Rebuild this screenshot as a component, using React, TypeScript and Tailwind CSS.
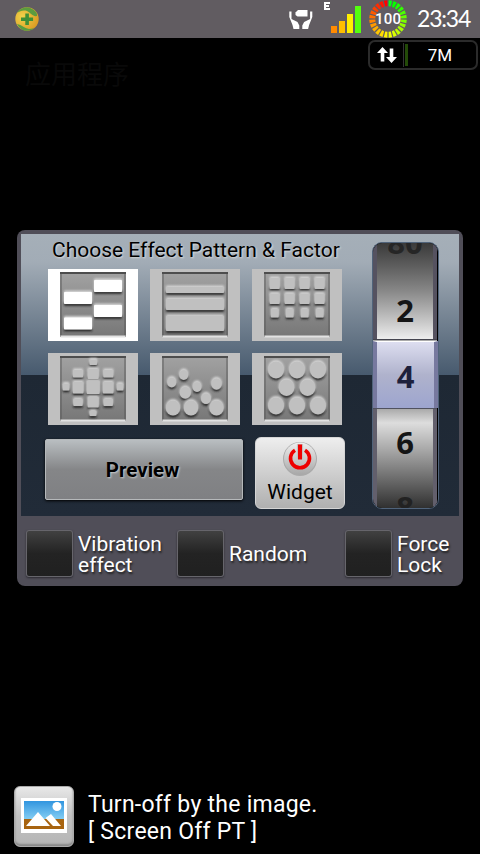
import type { ReactNode } from 'react';

type Rect = [number, number, number, number];
type Dot = [number, number, number];

interface Pattern {
  name: string;
  rects?: Rect[];
  dots?: Dot[];
}

const columns = [17.7, 32.6, 47.6, 62.6];

const patterns: Pattern[] = [
  {
    name: 'bricks',
    rects: [[46, 11, 28, 12], [16, 23, 28, 12], [46, 36, 28, 12], [16, 48.5, 28, 12]],
  },
  {
    name: 'bars',
    rects: [[16, 18, 58, 6], [16, 30, 58, 11], [16, 47, 58, 15]],
  },
  {
    name: 'grid',
    rects: columns.flatMap((x): Rect[] => [
      [x, 9, 10, 11],
      [x, 24.5, 10, 10.5],
      [x + 1.2, 40, 7.8, 8.5],
    ]),
  },
  {
    name: 'star',
    rects: [
      [41.5, 6.5, 7.5, 5.5],
      [25, 17, 10, 7.5], [39.7, 16, 11, 10], [55.3, 17, 10, 7.5],
      [14.8, 30.5, 6.5, 7], [24.9, 29, 10.6, 11.5], [38.7, 28, 13, 13], [54.9, 29, 10.6, 11.5], [68.8, 30.5, 6.5, 7],
      [25.3, 46, 9.4, 7], [39.7, 44, 11, 10.5], [55.5, 46, 9.4, 7],
      [41.5, 58, 7, 5],
    ],
  },
  {
    name: 'bubbles',
    dots: [
      [33.7, 22, 4.5], [21.7, 29.5, 4.5], [47, 34, 4.5], [66.5, 31, 5.3], [35.3, 39.7, 5.6],
      [56, 45.7, 5], [23, 55, 7.2], [41, 55, 7.2], [66.5, 55, 7.2],
    ],
  },
  {
    name: 'dots',
    dots: [
      [24, 17, 8], [45, 17, 8], [66, 17, 8],
      [34.5, 34.8, 7.8], [55.5, 34.8, 7.8],
      [24, 53, 8], [45, 53, 8], [66, 53, 8],
    ],
  },
];

function PatternThumb({ pattern, selected }: { pattern: Pattern; selected?: boolean }) {
  const fill = selected ? '#ffffff' : '#c0c0c0';
  const shapes = (
    <>
      {pattern.rects?.map(([x, y, w, h]) => <rect key={`${x}-${y}`} x={x} y={y} width={w} height={h} rx={0.8} />)}
      {pattern.dots?.map(([x, y, r]) => <ellipse key={`${x}-${y}`} cx={x} cy={y} rx={r} ry={r + 0.4} />)}
    </>
  );
  return (
    <svg width="90" height="72" viewBox="0 0 90 72" className="block">
      <defs>
        <linearGradient id={`well-${pattern.name}`} x1="0" y1="0" x2="0" y2="1">
          <stop offset="0" stopColor="#a2a2a2" />
          <stop offset="1" stopColor="#777777" />
        </linearGradient>
        <filter id={`soft-${pattern.name}`}>
          <feGaussianBlur stdDeviation="1" />
        </filter>
      </defs>
      <rect width="90" height="72" fill={fill} />
      <rect x="12" y="3" width="66" height="65" fill={`url(#well-${pattern.name})`} />
      <path d="M13 66.5V4h64v62.5" fill="none" stroke="#555" strokeOpacity=".55" strokeWidth="1.6" />
      <path d="M12 4h66" stroke="#4d4d4d" strokeWidth="2" />
      <path d="M12.5 67.5h65" stroke="#e2e2e2" strokeWidth="2" />
      <g filter={`url(#soft-${pattern.name})`}>
        <g fill="#222" transform="translate(0 1.8)">{shapes}</g>
        <g fill="#d8d8d8" transform="translate(0 -1.5)">{shapes}</g>
      </g>
      <g fill={fill}>{shapes}</g>
    </svg>
  );
}

function GuardIcon() {
  return (
    <svg width="30" height="32" viewBox="0 0 30 32" className="block">
      <defs>
        <radialGradient id="guard" cx=".3" cy=".4" r=".8">
          <stop offset="0" stopColor="#f0d24a" />
          <stop offset="1" stopColor="#d8951f" />
        </radialGradient>
      </defs>
      <circle cx="15" cy="15" r="11.7" fill="url(#guard)" />
      <path d="M5 9C9 2 18 1 24 8c1 1 1 3 1 4-4 1-6-3-10-5-4-1-7 0-10 2z" fill="#5c9c3e" />
      <path d="M5 20c5 1 7 4 12 5 3 0 5-1 6-2-5 6-14 5-18-3z" fill="#579d42" />
      <path d="M13.3 9.5h3.6v4h4.2v3.6h-4.2v4h-3.6v-4H9v-3.6h4.3z" fill="#3f8f36" />
    </svg>
  );
}

function HandsIcon() {
  return (
    <svg width="24" height="22" viewBox="0 0 24 22" className="block">
      <path d="M6.5 3.5 9 1h9.500v6.5H8.500L6.500 6z" fill="white" />
      <path d="M.3 2.500H2.500V10l6 3 1.800 3.500V20H4.500L3.500 16 .3 8z" fill="white" />
      <path d="M23.300 2.500H21.100V10l-6 3-1.800 3.500V20h5.800l1-4 3.200-8z" fill="white" />
    </svg>
  );
}

function BatteryRing() {
  const ticks = Array.from({ length: 24 }, (_, i) => {
    const hue = i < 12 ? 125 - i * 5.6 : 57 - (i - 12) * 5.2;
    return { angle: i * 15 + 7.5, color: `hsl(${hue} 100% 50%)` };
  });
  return (
    <svg width="40" height="38" viewBox="0 0 40 38" className="block">
      {ticks.map(tick => (
        <path
          key={tick.angle}
          d="M18.2 .3h3.6l-.7 6h-2.200z"
          fill={tick.color}
          transform={`rotate(${tick.angle} 20 19)`}
        />
      ))}
      <text x="20" y="24.4" textAnchor="middle" textLength="26" fill="white" className="font-['Roboto',sans-serif] text-[15px] font-medium">100</text>
    </svg>
  );
}

function StatusBar() {
  return (
    <header className="flex h-[38px] items-start bg-[#615c61] pl-3">
      <div className="pt-1"><GuardIcon /></div>
      <div className="ml-[247px] pt-[9px]"><HandsIcon /></div>
      <svg width="39" height="36" viewBox="0 0 39 36" className="ml-[10px] block">
        <path d="M1 2h6v2H3v1h3v2H3v1h4v2H1z" fill="white" />
        <rect x="8" y="26" width="6" height="7" fill="#ff8a00" />
        <rect x="16" y="21" width="6" height="12" fill="#ffbe00" />
        <rect x="24" y="14" width="6" height="19" fill="#fff000" />
        <rect x="32" y="6" width="6" height="27" fill="#54ff0e" />
      </svg>
      <div className="ml-[6px]"><BatteryRing /></div>
      <div className="ml-[9px] pt-1 font-['Lato',sans-serif] text-[23px] leading-[29px] tracking-[-1.2px] whitespace-nowrap text-white">23:34</div>
    </header>
  );
}

function TrafficBadge() {
  return (
    <div className="mt-[2px] mr-[2px] flex h-[30px] w-[110px] items-center self-end rounded-[7px] border-2 border-[#2b2b2b] bg-black">
      <div className="flex w-[33px] justify-center pl-px">
        <svg width="20" height="16" viewBox="0 0 20 16" className="block">
          <path d="M5.500 0 11 6H7.300v8.500H3.700V6H0z" fill="white" />
          <path d="M14.500 16 9 10h3.700V1.500h3.600V10H20z" fill="white" />
        </svg>
      </div>
      <div className="h-6 w-px bg-[#333]" />
      <div className="ml-px h-[22px] w-[3px] bg-[#234a08]" />
      <div className="flex-1 pr-1 text-center text-[17px] leading-5 text-white">7M</div>
    </div>
  );
}

function FactorWheel() {
  return (
    <div className="mt-2 h-[267px] w-[67px] overflow-hidden rounded-[10px] border border-[#50637a] bg-black pr-px text-center font-['Noto_Sans','Open_Sans',sans-serif] text-[31px] leading-[38px] font-bold text-[#151515]">
      <div className="h-[96px] overflow-hidden border-x-[4px] border-[#555260] bg-gradient-to-b from-[#3a3a3a] via-[#888] to-[#eeeeee]">
        <div className="-mt-[20px] text-[#262626]">80</div>
        <div className="mt-[30px]">2</div>
      </div>
      <div className="h-px bg-[#45454f]" />
      <div className="h-px bg-[#aaa]" />
      <div className="-mr-px h-[67px] border-x-[4px] border-t border-x-[#77799f] border-t-white bg-gradient-to-b from-[#dddef0] via-[#afb2cc] to-[#9da5cf] pt-[15px] text-[#1d203c]">4</div>
      <div className="h-px bg-[#50525f]" />
      <div className="h-[99px] overflow-hidden border-x-[4px] border-[#625f6c] bg-[linear-gradient(#aaa,#ddd_14%,#aaa_40%,#303030)] pt-[14px]">
        <div>6</div>
        <div className="mt-[27px] text-[#222]">8</div>
      </div>
    </div>
  );
}

function PowerIcon() {
  return (
    <svg width="36" height="36" viewBox="0 0 36 36" className="block">
      <defs>
        <linearGradient id="power-disc" x1="0" y1="0" x2="0" y2="1">
          <stop offset="0" stopColor="#eeeeee" />
          <stop offset="1" stopColor="#a8a8a8" />
        </linearGradient>
      </defs>
      <circle cx="18" cy="18" r="17" fill="#aaa" />
      <circle cx="18" cy="17.5" r="16" fill="url(#power-disc)" />
      <path d="M13 9.2a9.500 9.500 0 1 0 10 0" fill="none" stroke="#ee0000" strokeWidth="3.6" />
      <path d="M18 3V18.500" stroke="#c4c0c0" strokeWidth="6.2" />
      <path d="M18 3.500V18.500" stroke="#f00000" strokeWidth="4" />
    </svg>
  );
}

function CheckOption({ className, children }: { className: string; children: ReactNode }) {
  return (
    <label className={`flex items-center ${className}`}>
      <span className="h-[47px] w-[47px] shrink-0 rounded-[3px] border border-[#66656b] bg-gradient-to-b from-[#414141] via-[#232323] to-[#202020] shadow-[0_1px_2px_#2a2930]" />
      <span className="ml-[5px] pt-[3px] text-[21px] leading-[21px] whitespace-nowrap text-white [text-shadow:1px_2px_2px_#222]">{children}</span>
    </label>
  );
}

function EffectDialog() {
  return (
    <section className="mt-[160px] ml-[17px] h-[356px] w-[446px] rounded-[8px] bg-[#504e58] p-1">
      <div className="flex h-[282px] bg-[linear-gradient(#a5afb8_0,#a2acb6_10%,#475a6e_50%,#1e2834_50%,#212b38)]">
        <div className="w-[324px]">
          <h1 className="ml-[31px] h-[35px] pt-1 text-[21px] leading-[25px] whitespace-nowrap text-black [text-shadow:1px_1px_2px_#ddd]">Choose Effect Pattern &amp; Factor</h1>
          <div className="ml-[27px] grid w-[294px] grid-cols-3 gap-3">
            {patterns.map((pattern, i) => (
              <PatternThumb key={pattern.name} pattern={pattern} selected={i === 0} />
            ))}
          </div>
          <div className="mt-3 ml-6 flex gap-3">
            <button className="mt-[2px] h-[61px] w-[198px] rounded-[2px] border border-[#b5b8ba] bg-[linear-gradient(#b9bec1,#858688_50%,#7f8083)] pt-[2px] pr-[3px] text-[20.500px] font-bold text-black shadow-[0_1px_3px_#000] [text-shadow:1px_1px_2px_#ccc]">Preview</button>
            <button className="flex h-[72px] w-[90px] flex-col items-center rounded-[6px] border border-[#d5d5d5] bg-gradient-to-b from-[#eeeeee] to-[#b0b0b0] pt-[3px] text-[21px] leading-[25px] text-black">
              <PowerIcon />
              <span className="mt-[3px]">Widget</span>
            </button>
          </div>
        </div>
        <div className="ml-[27px]"><FactorWheel /></div>
      </div>
      <div className="flex h-[66px] items-center pt-2 pl-[5px]">
        <CheckOption className="w-[151px]">Vibration<br />effect</CheckOption>
        <CheckOption className="w-[168px]">Random</CheckOption>
        <CheckOption className="w-[110px]">Force<br />Lock</CheckOption>
      </div>
    </section>
  );
}

function ImageIcon() {
  return (
    <div className="h-[61px] w-[60px] rounded-[6px] border border-[#aaa] bg-gradient-to-b from-[#e8e8e8] via-[#c2c2c2] to-[#b5b5b5] pt-[10px] pl-[6px] shadow-[inset_0_-2px_2px_#888]">
      <svg width="46" height="37" viewBox="0 0 46 37" className="block">
        <defs>
          <linearGradient id="sky" x1="0" y1="0" x2="0" y2="1">
            <stop offset="0" stopColor="#3195df" />
            <stop offset="1" stopColor="#83cdf3" />
          </linearGradient>
        </defs>
        <rect y="1" width="46" height="35" fill="white" />
        <rect x="3" y="4" width="40" height="18" fill="url(#sky)" />
        <rect x="3" y="22" width="40" height="10" fill="#a86410" />
        <circle cx="36" cy="9.5" r="4.5" fill="white" />
        <path d="M5 29 17 15l12 14zM24.500 21l5.500-4 10 12h-8z" fill="white" />
      </svg>
    </div>
  );
}

export default function App() {
  return (
    <main className="relative flex h-[854px] w-[480px] flex-col overflow-hidden bg-black font-['Roboto',sans-serif]">
      <div className="pointer-events-none absolute top-[58px] left-[25px] font-['Roboto','Noto_Sans_CJK_SC',sans-serif] text-[26px] leading-[34px] text-[#090909]">应用程序</div>
      <StatusBar />
      <TrafficBadge />
      <EffectDialog />
      <footer className="mt-[200px] ml-[14px] flex">
        <ImageIcon />
        <p className="ml-[14px] pt-[5px] text-[23px] leading-[27px] tracking-[0.26px] whitespace-nowrap text-white">Turn-off by the image.<br />[ Screen Off PT ]</p>
      </footer>
    </main>
  );
}
